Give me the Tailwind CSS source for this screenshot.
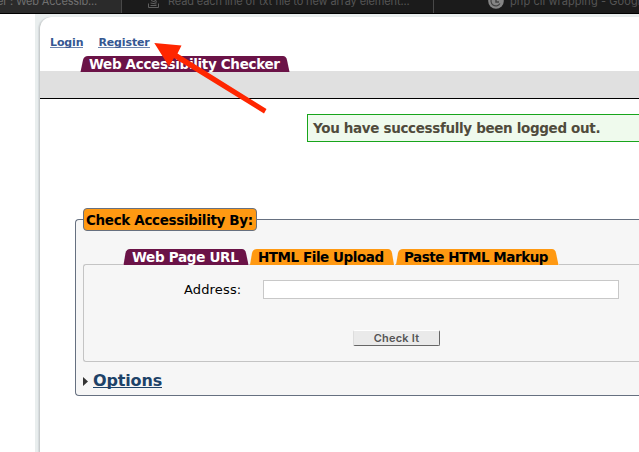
<!DOCTYPE html>
<html lang="en">
<head>
<meta charset="utf-8">
<title>Web Accessibility Checker</title>
<script src="https://cdn.jsdelivr.net/npm/@tailwindcss/browser@4"></script>
</head>
<body class="w-[639px] h-[452px] overflow-hidden bg-white font-['Verdana','DejaVu_Sans',sans-serif] relative whitespace-nowrap text-black">
<header class="h-[14px] flex overflow-hidden bg-[#1b1b1b] border-b border-black font-['Inter',sans-serif] text-[11px] leading-[13px] text-[#555]">
  <div class="w-[122px] h-[13px] shrink-0 bg-[#2b2b2b] border-r border-[#484848] text-[#707070]"><span class="block -mt-[5px] -ml-[3px] tracking-[-0.18px]">er : Web Accessib...</span></div>
  <div class="w-[312px] h-[13px] shrink-0 border-r border-[#484848] flex">
    <svg class="ml-[25px] w-[14px] h-[9px] shrink-0" viewBox="0 0 14 9" fill="none" stroke="#606060" stroke-width="1"><path d="M1.500 3.500v4h10v-4M3.500 5.500h6M3.500 3l6 1M4 .5l5.500 2M6-1l4 2.500"/></svg>
    <span class="block -mt-[5px] ml-[7px] tracking-[-0.12px]">Read each line of txt file to new array element...</span>
  </div>
  <div class="flex">
    <svg class="ml-[54px] w-[16px] h-[9px] shrink-0" viewBox="0 0 16 9"><circle cx="8" cy="1" r="7.800" fill="#858585"/><path d="M12 3.500A4.800 4.800 0 1 1 11.500-2" fill="none" stroke="#444" stroke-width="1.200"/><path d="M8-1v3h3" fill="none" stroke="#444" stroke-width="1.500"/></svg>
    <span class="block -mt-[5px] ml-[6px] tracking-[0.08px]">php cli wrapping - Google</span>
  </div>
</header>
<div class="ml-[35px] h-[438px] bg-[#e9eeee] pt-[3px] pl-[4px]">
<main class="h-[435px] bg-white border-l border-[#c8cccc] rounded-tl-[12px] shadow-[-1px_0_1px_#d5dadd]">
  <nav class="h-[39px] pt-[19px] pl-[10px] flex gap-[15px] text-[11px] leading-[13px] font-bold text-[#355792]">
    <a class="border-b border-[#6b83ad] h-[12px] tracking-[-0.13px]">Login</a>
    <a class="border-b border-[#6b83ad] h-[12px] tracking-[-0.13px]">Register</a>
  </nav>
  <div class="h-[43px] bg-[linear-gradient(#fff_15px,#e0e0e0_15px)] border-b border-black pl-[40px]">
    <h1 class="relative w-[210px] h-[16px] text-white text-[13.5px] leading-[16px] font-bold">
      <svg class="absolute inset-0 w-[210px] h-[16px]" viewBox="0 0 210 16"><path d="M.5 16L3 4Q4 0 8 0H203Q206 0 207 4L209.500 16Z" fill="#6b1347"/></svg>
      <span class="relative ml-[9px] tracking-[-0.33px]">Web Accessibility Checker</span>
    </h1>
  </div>
  <div class="mt-[15px] ml-[267px] h-[28px] border border-r-0 border-[#18a51b] bg-[#effaed] pl-[5px] text-[13.5px] leading-[26px] font-bold text-[#504b3c]"><span class="tracking-[-0.34px]">You have successfully been logged out.</span></div>
  <section class="relative mt-[77px] ml-[35px] h-[177px] border border-r-0 border-[#667080] rounded-l-[4px] bg-[#f6f6f6] pt-[44px] pl-[7px]">
    <h2 class="absolute left-[7px] -top-[12px] w-[174px] h-[23px] rounded-[4px] border border-[#667080] bg-[#ff9912] pl-[2px] text-[13.5px] leading-[22px] font-bold"><span class="tracking-[-0.34px]">Check Accessibility By:</span></h2>
    <div class="h-[98px] border border-r-0 border-[#c4c4c4] rounded-l-[3px] pl-[39px]">
      <div class="-mt-[16px] h-[16px] flex gap-[1px] text-[13.5px] leading-[16px] font-bold">
        <div class="relative w-[126px] shrink-0 bg-[#f6f6f6] text-white"><svg class="absolute inset-0 w-[126px] h-[16px]" viewBox="0 0 126 16"><path d="M.5 16L2.500 4Q3.500 0 7 0H119Q122 0 123 4L125.500 16Z" fill="#6b1347"/></svg><span class="relative ml-[9px] tracking-[-0.3px]">Web Page URL</span></div>
        <div class="relative w-[145px] shrink-0 bg-[#f6f6f6]"><svg class="absolute inset-0 w-[145px] h-[16px]" viewBox="0 0 145 16"><path d="M0 16L2 4Q3 0 7 0H138Q141 0 142 4L144 16Z" fill="#ff9912"/></svg><span class="relative ml-[8px] tracking-[-0.45px]">HTML File Upload</span></div>
        <div class="relative w-[163px] shrink-0 bg-[#f6f6f6]"><svg class="absolute inset-0 w-[163px] h-[16px]" viewBox="0 0 163 16"><path d="M0 16L2 4Q3 0 7 0H156Q159 0 160 4L162.500 16Z" fill="#ff9912"/></svg><span class="relative ml-[8px] tracking-[-0.45px]">Paste HTML Markup</span></div>
      </div>
      <div class="mt-[15px] ml-[61px] flex text-[13px] leading-[19px]">
        <label class="w-[79px] tracking-[0.15px]">Address:</label>
        <div class="w-[356px] h-[19px] shrink-0 bg-white border border-[#c8c8c8]"></div>
      </div>
      <div class="mt-[31px] ml-[230px] w-[87px] h-[16px] rounded-[2px] bg-[#eaeaea] border border-t-white border-l-[#ddd] border-r-[#666] border-b-[#666] text-center font-['Inter',sans-serif] text-[11px] leading-[15px] font-semibold text-[#555]"><span class="tracking-[0.2px]">Check It</span></div>
    </div>
    <div class="mt-[8px] flex items-start h-[21px] text-[16px] leading-[21px] font-bold text-[#1d4268]">
      <svg class="w-[5px] h-[9px] mr-[5px] mt-[7px]" viewBox="0 0 5 9"><path d="M0 0L5 4.500L0 9Z" fill="#333"/></svg>
      <a class="h-[18px] border-b border-[#1d4268] tracking-[-0.15px]">Options</a>
    </div>
  </section>
</main>
</div>
<svg class="absolute left-[150px] top-[40px] w-[120px] h-[76px]" viewBox="0 0 120 76"><path d="M4.300 3L31.500 5.500L27.500 13.500L116.500 69L114 73.500L24 18L19 26.500Z" fill="#ff2600"/></svg>
</body>
</html>
